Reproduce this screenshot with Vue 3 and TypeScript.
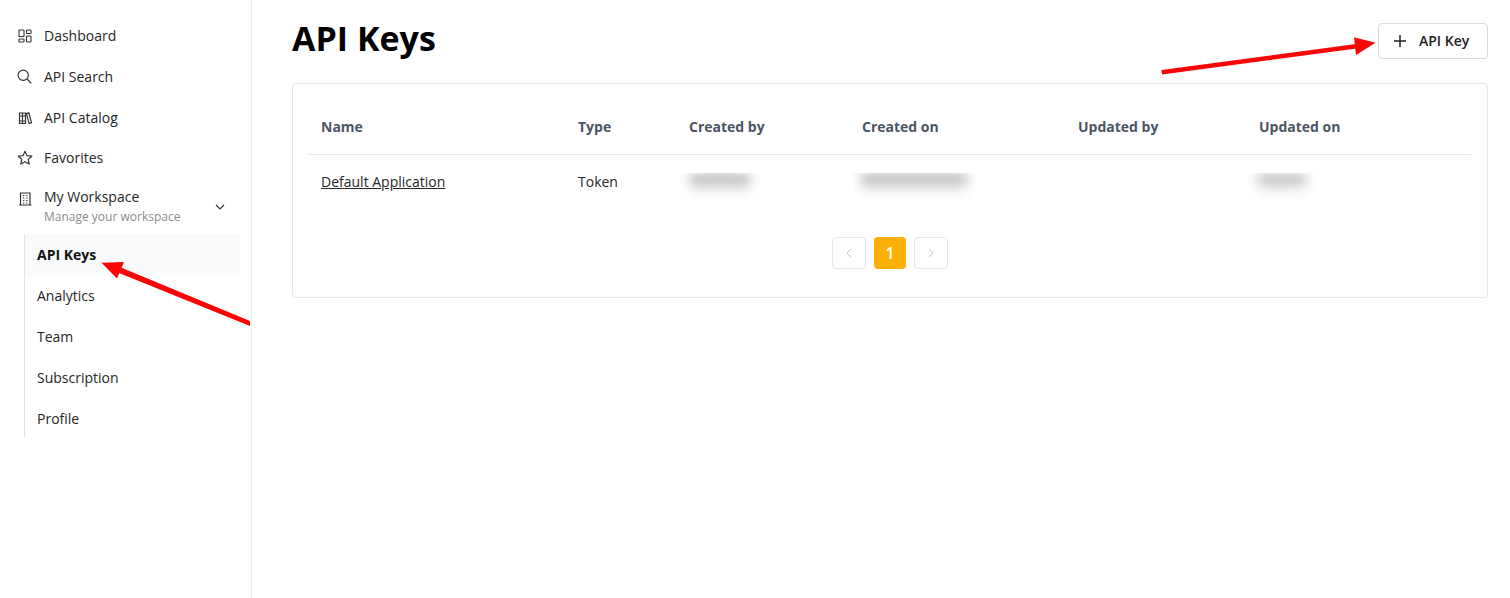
<script setup lang="ts">
const columns = ['Name', 'Type', 'Created by', 'Created on', 'Updated by', 'Updated on']
const subItems = ['API Keys', 'Analytics', 'Team', 'Subscription', 'Profile']
</script>

<template>
  <div class="page">
    <aside class="sidebar">
      <nav class="menu">
        <a class="item">
          <svg class="icon" viewBox="0 0 14 14" fill="none" stroke="#333" stroke-width="1.1"><rect x="1" y="1" width="5" height="6.5" rx=".6"/><rect x="8.500" y="1" width="4.500" height="3.500" rx=".6"/><rect x="1" y="10" width="5" height="3" rx=".6"/><rect x="8.500" y="7" width="4.500" height="6" rx=".6"/></svg>
          <span>Dashboard</span>
        </a>
        <a class="item">
          <svg class="icon search" viewBox="0 0 14 14" fill="none" stroke="#333" stroke-width="1.1"><circle cx="5.800" cy="5.800" r="4.800"/><path d="M9.300 9.300l4 4"/></svg>
          <span>API Search</span>
        </a>
        <a class="item">
          <svg class="icon" viewBox="0 0 14 14" fill="none" stroke="#333" stroke-width="1.2"><path d="M1.500 2h3v10.500h-3zM4.500 2h3v10.500h-3zM1.500 5h6M1.500 10h6M8.500 2.600l2.300-.8 2.700 10-2.400.8z"/></svg>
          <span>API Catalog</span>
        </a>
        <a class="item">
          <svg class="icon star" viewBox="0 0 16 16" fill="none" stroke="#333" stroke-width="1.2" stroke-linejoin="round"><path d="M8 1.300l2 4.400 4.800.5-3.600 3.200 1 4.700L8 11.700l-4.200 2.400 1-4.700L1.200 6.200 6 5.700z"/></svg>
          <span>Favorites</span>
        </a>
        <a class="item workspace">
          <svg class="icon" viewBox="0 0 14 14" fill="none" stroke="#333" stroke-width="1.2"><path d="M2.500 13V1h9.500v12M1 13h12.500"/><path d="M5 3.500h1.300M8.300 3.500h1.300M5 6h1.300M8.300 6h1.300M5 8.500h1.300M8.300 8.500h1.300M5 11h1.300M8.300 11h1.300"/></svg>
          <span class="workspace-text">
            <span>My Workspace</span>
            <small>Manage your workspace</small>
          </span>
          <svg class="chevron" viewBox="0 0 10 6" fill="none" stroke="#333" stroke-width="1.1"><path d="M1 1l4 4 4-4"/></svg>
        </a>
      </nav>
      <ul class="submenu">
        <li v-for="(entry, i) in subItems" :key="entry" :class="{ active: i === 0 }">{{ entry }}</li>
      </ul>
    </aside>

    <main class="main">
      <header class="header">
        <h1>API Keys</h1>
        <button class="add" type="button">
          <svg viewBox="0 0 14 14" fill="none" stroke="#222" stroke-width="1.5"><path d="M7 1v12M1 7h12"/></svg>
          <span>API Key</span>
        </button>
      </header>

      <section class="card">
        <table>
          <colgroup>
            <col class="c1" /><col class="c2" /><col class="c3" /><col class="c4" /><col class="c5" /><col class="c6" />
          </colgroup>
          <thead>
            <tr><th v-for="c in columns" :key="c">{{ c }}</th></tr>
          </thead>
          <tbody>
            <tr>
              <td><a class="link">Default Application</a></td>
              <td>Token</td>
              <td><span class="smudge-box b1"><span class="smudge s1"></span></span></td>
              <td><span class="smudge-box b2"><span class="smudge s2"></span></span></td>
              <td></td>
              <td><span class="smudge-box b3"><span class="smudge s3"></span></span></td>
            </tr>
          </tbody>
        </table>
        <div class="pager">
          <span class="page-btn"><svg viewBox="0 0 6 10" fill="none" stroke="#c4c4c4" stroke-width="1"><path d="M5 1L1 5l4 4"/></svg></span>
          <span class="page-current">1</span>
          <span class="page-btn"><svg viewBox="0 0 6 10" fill="none" stroke="#c4c4c4" stroke-width="1"><path d="M1 1l4 4-4 4"/></svg></span>
        </div>
      </section>
    </main>

    <svg class="arrows" viewBox="0 0 1510 598" fill="#fa0505">
      <path d="M250 321L250 326L119 273L121 267.500Z" />
      <path d="M101.500 262.700L124 262L117 278.500Z" />
      <path d="M1161.500 70L1356 44L1356.500 48.500L1162 74.500Z" />
      <path d="M1375.500 42.700L1354 37.300L1356 55Z" />
    </svg>
  </div>
</template>

<style scoped>
.page {
  position: relative;
  display: flex;
  width: 1510px;
  height: 598px;
  overflow: hidden;
  background: #fff;
  font-family: "Open Sans", "Noto Sans", sans-serif;
  font-size: 14px;
  color: #262626;
}
.sidebar {
  flex: none;
  box-sizing: border-box;
  width: 252px;
  border-right: 1px solid #ebebeb;
  padding-top: 15px;
}
.menu {
  display: flex;
  flex-direction: column;
}
.item {
  display: flex;
  align-items: center;
  height: 41px;
  padding-left: 18px;
  line-height: 20px;
}
.item:nth-child(4) {
  height: 40px;
}
.icon {
  flex: none;
  width: 14px;
  height: 14px;
  margin-right: 12px;
}
.search {
  width: 15px;
  height: 15px;
  margin-left: -1px;
}
.star {
  width: 16px;
  height: 16px;
  margin-left: -1px;
  margin-right: 11px;
}
.workspace {
  height: 58px;
}
.workspace .icon {
  margin-top: -17px;
}
.workspace-text {
  display: flex;
  flex-direction: column;
}
.workspace-text small {
  font-size: 12px;
  line-height: 20px;
  color: #8c8c8c;
}
.chevron {
  width: 10px;
  height: 6px;
  margin-left: 35px;
}
.submenu {
  box-sizing: border-box;
  list-style: none;
  margin: -2px 0 0 24px;
  padding: 0;
  width: 216px;
  border-left: 1px solid #e3e3e3;
}
.submenu li {
  box-sizing: border-box;
  display: flex;
  align-items: center;
  height: 41px;
  padding-left: 12px;
  line-height: 20px;
}
.submenu li:last-child {
  height: 40px;
  padding-top: 2px;
}
.submenu .active {
  background: #f9fafb;
  font-weight: 700;
  color: #111;
}
.main {
  flex: 1;
  min-width: 0;
  padding: 0 22px 0 40px;
}
.header {
  display: flex;
  align-items: center;
  justify-content: space-between;
  height: 83px;
  padding-bottom: 7px;
  box-sizing: border-box;
}
h1 {
  margin: 0;
  font-size: 34px;
  font-weight: 700;
  line-height: 44px;
  color: #000;
}
.add {
  display: flex;
  align-items: center;
  gap: 12px;
  box-sizing: border-box;
  width: 110px;
  height: 36px;
  padding: 0 0 1px 14px;
  margin-top: 6px;
  background: #fff;
  border: 1px solid #d9d9d9;
  border-radius: 4px;
  font: 600 14px "Open Sans", sans-serif;
  color: #222;
}
.add svg {
  width: 14px;
  height: 14px;
}
.card {
  box-sizing: border-box;
  height: 215px;
  border: 1px solid #e5e5e5;
  border-radius: 4px;
  padding: 16px 16px 0;
}
table {
  width: 1162px;
  border-collapse: collapse;
  table-layout: fixed;
}
.c1 { width: 257px; }
.c2 { width: 111px; }
.c3 { width: 173px; }
.c4 { width: 216px; }
.c5 { width: 181px; }
.c6 { width: 224px; }
th {
  box-sizing: border-box;
  height: 54px;
  padding: 0 12px;
  border-bottom: 1px solid #e5e5e5;
  text-align: left;
  font-weight: 700;
  color: #4b5563;
}
td {
  box-sizing: border-box;
  height: 54px;
  padding: 0 12px;
  vertical-align: middle;
}
.link {
  text-decoration: underline;
  color: #262626;
}
.smudge-box {
  display: block;
  height: 28px;
  margin-top: 12px;
  overflow: hidden;
}
.b1 { width: 86px; margin-left: -10px; }
.b2 { width: 122px; margin-left: -9px; }
.b3 { width: 76px; margin-left: -14px; }
.smudge {
  display: block;
  height: 10px;
  border-radius: 5px;
  background: #b4b4b4;
  filter: blur(6px);
  box-shadow: 0 9px 8px rgba(0, 0, 0, 0.07);
  margin-top: 1px;
}
.s1 { width: 62px; margin-left: 10px; }
.s2 { width: 108px; margin-left: 7px; }
.s3 { width: 50px; margin-left: 12px; background: #bcbcbc; }
.pager {
  display: flex;
  justify-content: center;
  gap: 8px;
  margin-top: 29px;
}
.page-btn,
.page-current {
  display: flex;
  align-items: center;
  justify-content: center;
  box-sizing: border-box;
  height: 32px;
  border-radius: 4px;
}
.page-btn {
  width: 34px;
  border: 1px solid #e5e5e5;
}
.page-btn svg {
  width: 6px;
  height: 10px;
}
.page-current {
  width: 32px;
  background: #fdb00a;
  color: #fff;
  font-size: 16px;
  font-weight: 600;
}
.arrows {
  position: absolute;
  inset: 0;
  width: 1510px;
  height: 598px;
  pointer-events: none;
}
</style>
